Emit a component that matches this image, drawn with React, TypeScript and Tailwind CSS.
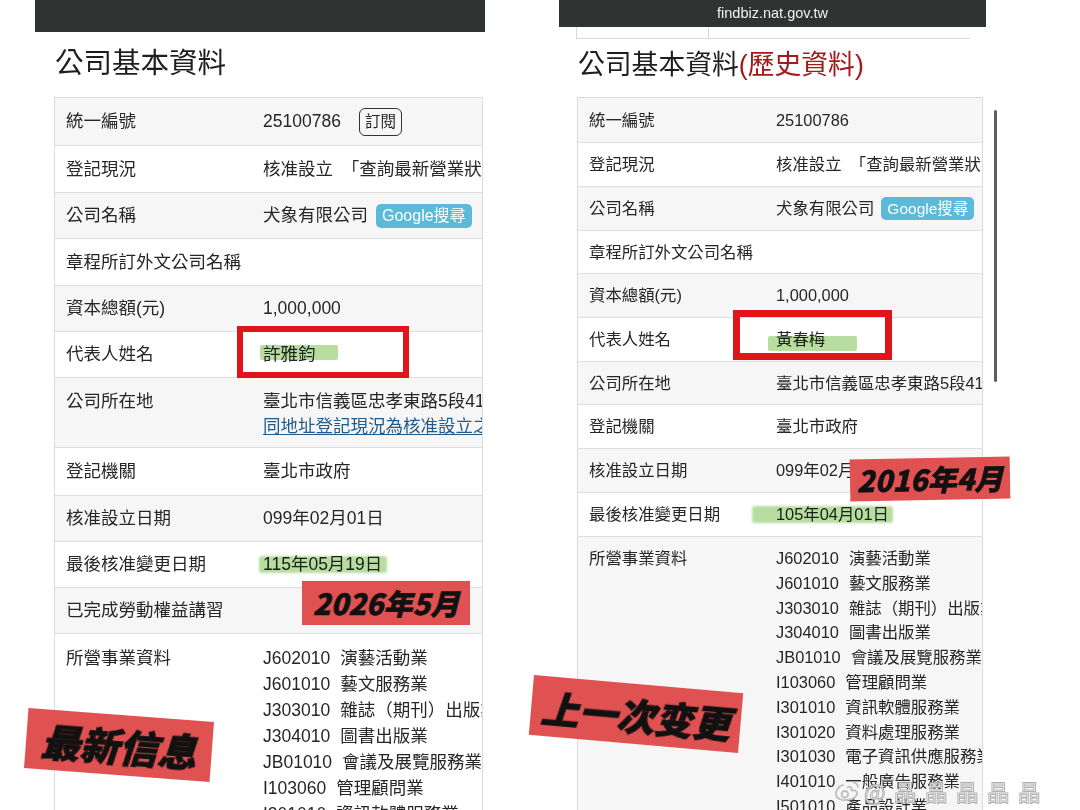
import type { ReactNode } from "react"

interface Row {
  label: string
  h: string
  gray: boolean
  top?: boolean
  value: ReactNode
}

const codes = [
  ["J602010", "演藝活動業"],
  ["J601010", "藝文服務業"],
  ["J303010", "雜誌（期刊）出版業"],
  ["J304010", "圖書出版業"],
  ["JB01010", "會議及展覽服務業"],
  ["I103060", "管理顧問業"],
  ["I301010", "資訊軟體服務業"],
  ["I301020", "資料處理服務業"],
  ["I301030", "電子資訊供應服務業"],
  ["I401010", "一般廣告服務業"],
  ["I501010", "產品設計業"],
]

function CodeList({ count }: { count: number }) {
  return (
    <div className="flex flex-col">
      {codes.slice(0, count).map(([c, n]) => (
        <div key={c} className="whitespace-nowrap">
          {c}
          <span className="ml-[10px]">{n}</span>
        </div>
      ))}
    </div>
  )
}

function Table({ rows, big }: { rows: Row[]; big: boolean }) {
  return (
    <div
      className={
        big
          ? "ml-[19px] w-[429px] flex-1 flex flex-col overflow-hidden border-x border-t border-[#dcdcdc] text-[17.5px] text-[#262626]"
          : "ml-[18px] w-[406px] flex-1 flex flex-col overflow-hidden border-x border-t border-[#dcdcdc] text-[16.4px] text-[#262626]"
      }
    >
      {rows.map((r) => (
        <div
          key={r.label}
          className={[
            "flex border-b border-[#dedede] shrink-0",
            r.h,
            r.gray ? "bg-[#f6f6f6]" : "bg-white",
            r.top ? "items-start" : "items-center",
          ].join(" ")}
        >
          <div className={big ? "w-[208px] shrink-0 pl-[11px] whitespace-nowrap" : "w-[198px] shrink-0 pl-[11px] whitespace-nowrap"}>
            {r.label}
          </div>
          <div className="flex-1 min-w-0 overflow-hidden whitespace-nowrap">{r.value}</div>
        </div>
      ))}
    </div>
  )
}

export default function App() {
  const font = "font-['Liberation_Sans','Noto_Sans_CJK_TC',sans-serif]"

  const leftRows: Row[] = [
    {
      label: "統一編號",
      h: "h-[48px]",
      gray: true,
      value: (
        <div className="flex items-center">
          <span>25100786</span>
          <span className="ml-[18px] border-[1.5px] border-[#333] rounded-[6px] px-[5px] h-[28px] flex items-center text-[15.5px]">訂閱</span>
        </div>
      ),
    },
    { label: "登記現況", h: "h-[47px]", gray: false, value: "核准設立　「查詢最新營業狀況請至財政部稅務入口網」" },
    {
      label: "公司名稱",
      h: "h-[46px]",
      gray: true,
      value: (
        <div className="flex items-center">
          <span>犬象有限公司</span>
          <span className="ml-[8px] h-[24px] px-[6px] rounded-[5px] bg-[#5cb9d8] text-white text-[16px] flex items-center">Google搜尋</span>
        </div>
      ),
    },
    { label: "章程所訂外文公司名稱", h: "h-[47px]", gray: false, value: "" },
    { label: "資本總額(元)", h: "h-[46px]", gray: true, value: "1,000,000" },
    { label: "代表人姓名", h: "h-[46px]", gray: false, value: "許雅鈞" },
    {
      label: "公司所在地",
      h: "h-[70px] pt-[11px] leading-[25px]",
      gray: true,
      top: true,
      value: (
        <div>
          <div>臺北市信義區忠孝東路5段41號</div>
          <div className="text-[#1f5a8c] underline underline-offset-2">同地址登記現況為核准設立之公司</div>
        </div>
      ),
    },
    { label: "登記機關", h: "h-[48px]", gray: false, value: "臺北市政府" },
    { label: "核准設立日期", h: "h-[46px]", gray: true, value: "099年02月01日" },
    { label: "最後核准變更日期", h: "h-[46px]", gray: false, value: "115年05月19日" },
    { label: "已完成勞動權益講習", h: "h-[46px]", gray: true, value: "" },
    {
      label: "所營事業資料",
      h: "flex-1 pt-[11px] leading-[26px]",
      gray: false,
      top: true,
      value: <CodeList count={8} />,
    },
  ]

  const rightRows: Row[] = [
    { label: "統一編號", h: "h-[45px]", gray: true, value: "25100786" },
    { label: "登記現況", h: "h-[44px]", gray: false, value: "核准設立　「查詢最新營業狀況請至財政部稅務入口網」" },
    {
      label: "公司名稱",
      h: "h-[44px]",
      gray: true,
      value: (
        <div className="flex items-center">
          <span>犬象有限公司</span>
          <span className="ml-[7px] h-[23px] px-[6px] rounded-[5px] bg-[#5cb9d8] text-white text-[15.5px] flex items-center">Google搜尋</span>
        </div>
      ),
    },
    { label: "章程所訂外文公司名稱", h: "h-[43px]", gray: false, value: "" },
    { label: "資本總額(元)", h: "h-[44px]", gray: true, value: "1,000,000" },
    { label: "代表人姓名", h: "h-[44px]", gray: false, value: "黃春梅" },
    { label: "公司所在地", h: "h-[43px]", gray: true, value: "臺北市信義區忠孝東路5段41號" },
    { label: "登記機關", h: "h-[44px]", gray: false, value: "臺北市政府" },
    { label: "核准設立日期", h: "h-[44px]", gray: true, value: "099年02月01日" },
    { label: "最後核准變更日期", h: "h-[44px]", gray: false, value: "105年04月01日" },
    {
      label: "所營事業資料",
      h: "flex-1 pt-[9px] leading-[24.8px]",
      gray: true,
      top: true,
      value: <CodeList count={11} />,
    },
  ]

  return (
    <div className={`relative w-[1080px] h-[810px] overflow-hidden bg-white flex ${font}`}>
      {/* left screenshot */}
      <div className="ml-[35px] w-[450px] h-full flex flex-col">
        <div className="h-[32px] bg-[#2f3432] shrink-0" />
        <div className="mt-[13px] pl-[20px] text-[28.5px] leading-[36px] text-[#1e1e1e] shrink-0">公司基本資料</div>
        <div className="mt-[16px] flex-1 flex flex-col min-h-0">
          <Table rows={leftRows} big />
        </div>
      </div>

      {/* right screenshot */}
      <div className="relative ml-[74px] w-[441px] h-full flex flex-col">
        <div className="w-[427px] h-[27px] bg-[#2f3432] shrink-0 flex items-center justify-center text-[14.5px] text-[#f0f0f0] font-['Liberation_Sans',sans-serif]">
          findbiz.nat.gov.tw
        </div>
        <div className="ml-[17px] w-[394px] h-[12px] border-l border-b border-[#d8d8d8] flex shrink-0">
          <div className="w-[132px] h-full border-r border-[#d8d8d8]" />
        </div>
        <div className="mt-[9px] pl-[19px] text-[26.8px] leading-[34px] text-[#1e1e1e] shrink-0">
          公司基本資料<span className="text-[#a3191c]">(歷史資料)</span>
        </div>
        <div className="mt-[15px] flex-1 flex flex-col min-h-0">
          <Table rows={rightRows} big={false} />
        </div>
        <div className="absolute left-[435px] top-[110px] w-[3px] h-[272px] rounded-full bg-[#5e5e5e]" />
      </div>

      {/* markers */}
      <div className="absolute left-[260px] top-[345px] w-[78px] h-[15px] bg-[#b7dea0] mix-blend-multiply rounded-[2px] blur-[0.6px]" />
      <div className="absolute left-[768px] top-[336px] w-[89px] h-[15px] bg-[#b7dea0] mix-blend-multiply rounded-[2px] blur-[0.6px]" />
      <div className="absolute left-[259px] top-[556px] w-[128px] h-[17px] bg-[#b7dea0] mix-blend-multiply rounded-[3px] blur-[0.8px]" />
      <div className="absolute left-[752px] top-[506px] w-[141px] h-[17px] bg-[#b7dea0] mix-blend-multiply rounded-[3px] blur-[0.8px]" />

      <div className="absolute left-[237px] top-[326px] w-[172px] h-[52px] border-[6px] border-[#e3131b]" />
      <div className="absolute left-[733px] top-[310px] w-[159px] h-[50px] border-[7px] border-[#e3131b]" />

      {/* stickers */}
      <div className="absolute left-[302px] top-[581px] w-[168px] h-[44px] bg-[#e05151] flex items-center justify-center font-['Noto_Sans_CJK_SC',sans-serif] font-black italic text-[29px] text-[#111] [-webkit-text-stroke:0.5px_#111]">
        2026年5月
      </div>
      <div className="absolute left-[850px] top-[458px] w-[160px] h-[42px] -rotate-1 bg-[#e05151] flex items-center justify-center font-['Noto_Sans_CJK_SC',sans-serif] font-black italic text-[29px] text-[#111] [-webkit-text-stroke:0.5px_#111]">
        2016年4月
      </div>
      <div className="absolute left-[26px] top-[715px] w-[186px] h-[60px] rotate-[4.3deg] bg-[#e05151] flex items-center justify-center font-['Noto_Sans_CJK_SC',sans-serif] font-black italic text-[39px] text-[#111] [-webkit-text-stroke:0.8px_#111]">
        最新信息
      </div>
      <div className="absolute left-[531px] top-[684px] w-[210px] h-[60px] rotate-[5deg] bg-[#e05151] flex items-center justify-center font-['Noto_Sans_CJK_SC',sans-serif] font-black italic text-[38px] text-[#111] [-webkit-text-stroke:0.8px_#111]">
        上一次变更
      </div>

      {/* watermark */}
      <div className="absolute left-[832px] top-[774px] flex items-center opacity-90">
        <svg width="30" height="24" viewBox="0 0 26 22" fill="none" stroke="#bdbdbd" strokeWidth="1.8">
          <path d="M10 5c-5 2-8 6-7 10 1 4 7 5 12 4 5-1 8-4 7-7-1-2-4-2-5-1 1-3-1-5-4-3" />
          <circle cx="11" cy="14" r="3" />
          <path d="M18 3c3 0 5 2 5 5" />
        </svg>
        <span className="ml-[2px] text-[23px] tracking-[8px] text-white [-webkit-text-stroke:1px_#a8a8a8] font-['Noto_Sans_CJK_SC',sans-serif]">
          @晶晶晶晶晶
        </span>
      </div>
    </div>
  )
}
